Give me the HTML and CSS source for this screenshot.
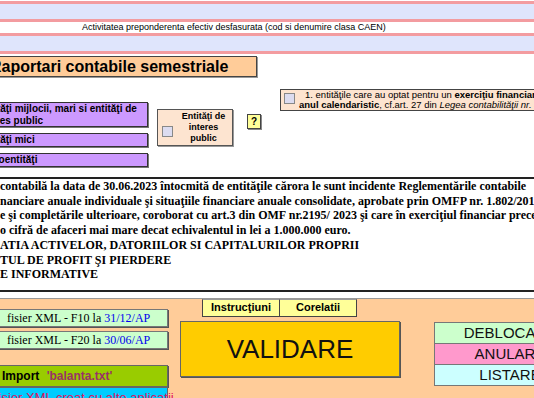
FILE: index.html
```html
<!DOCTYPE html>
<html lang="ro">
<head>
    <meta charset="UTF-8">
    <meta name="viewport" content="width=device-width, initial-scale=1.0">
    <title>Raportari contabile semestriale</title>
    <link rel="stylesheet" href="styles.css">
</head>
<body>
    <div class="caen">
        <div class="caen-cell"></div>
        <div class="caen-label">Activitatea preponderenta efectiv desfasurata (cod si denumire clasa CAEN)</div>
        <div class="caen-cell"></div>
    </div>

    <h1 class="title">Raportari contabile semestriale</h1>

    <div class="options">
        <div class="categories">
            <div class="cat cat-large">Entităţi mijlocii, mari si entităţi de<br>interes public</div>
            <div class="cat">Entităţi mici</div>
            <div class="cat">Microentităţi</div>
        </div>
        <div class="pie-box">
            <span class="check"></span>
            <span class="pie-text">Entităţi de<br>interes<br>public</span>
        </div>
        <div class="help">?</div>
        <div class="fiscal">
            <span class="check"></span>
            <span class="fiscal-text">
                <span class="indent">1. entităţile care au optat pentru un <b>exerciţiu financiar diferit de</b></span><br>
                <b>anul calendaristic</b>, cf.art. 27 din <i>Legea contabilităţii nr. 82/1991</i>
            </span>
        </div>
    </div>

    <div class="notes">
        <div class="intro">
            <p>contabilă la data de 30.06.2023 întocmită de entităţile cărora le sunt incidente Reglementările contabile</p>
            <p>nanciare anuale individuale şi situaţiile financiare anuale consolidate, aprobate prin OMFP nr. 1.802/2014</p>
            <p>e şi completările ulterioare, coroborat cu art.3 din OMF nr.2195/ 2023 şi care în exerciţiul financiar precedent</p>
            <p>o cifră de afaceri mai mare decat echivalentul in lei a 1.000.000 euro.</p>
        </div>
        <div class="reports">
            <p>ATIA ACTIVELOR, DATORIILOR SI CAPITALURILOR PROPRII</p>
            <p>TUL DE PROFIT ŞI PIERDERE</p>
            <p>E INFORMATIVE</p>
        </div>
    </div>

    <div class="panel">
        <div class="imports">
            <div class="btn-xml">fisier XML - F10 la <span class="date">31/12/AP</span></div>
            <div class="btn-xml">fisier XML - F20 la <span class="date">30/06/AP</span></div>
            <div class="btn-import">Import <span class="file">'balanta.txt'</span></div>
            <div class="btn-other">fisier XML creat cu alte aplicatii</div>
        </div>
        <div class="validate">
            <div class="tabs">
                <div class="tab">Instrucţiuni</div>
                <div class="tab">Corelatii</div>
            </div>
            <div class="btn-validate">VALIDARE</div>
        </div>
        <div class="actions">
            <div class="action unlock">DEBLOCARE</div>
            <div class="action cancel">ANULARE</div>
            <div class="action print">LISTARE</div>
        </div>
    </div>
</body>
</html>
```

FILE: styles.css
```css
* {
    margin: 0;
    padding: 0;
    box-sizing: border-box;
}

body {
    width: 534px;
    height: 398px;
    overflow: hidden;
    background-color: #fff;
    font-family: "Liberation Sans", Arial, sans-serif;
    color: #000;
}

/* CAEN header */

.caen {
    padding-top: 1px;
}

.caen-cell {
    height: 21px;
    background-color: #dfe5fc;
    border-top: 3px solid #f39ca0;
    border-bottom: 3px solid #f39ca0;
}

.caen-label {
    height: 11px;
    padding-left: 82px;
    font-size: 9px;
    line-height: 11px;
    white-space: nowrap;
}

.title {
    width: 268px;
    height: 21px;
    margin: 2px 0 0 -11px;
    background-color: #ffcc99;
    border: 1px solid #444;
    box-shadow: 1px 1px 0 #999;
    font-size: 16px;
    line-height: 19px;
    white-space: nowrap;
}

/* Entity options */

.options {
    display: flex;
    align-items: flex-start;
    height: 100px;
}

.categories {
    display: flex;
    flex-direction: column;
    gap: 6px;
    flex-shrink: 0;
    width: 174px;
    margin: 25px 0 0 -26px;
}

.cat {
    height: 14px;
    padding: 0 3px;
    background-color: #cc99ff;
    border: 1px solid #333;
    box-shadow: 1px 1px 0 #777;
    font-size: 10px;
    font-weight: bold;
    line-height: 12px;
    white-space: nowrap;
}

.cat-large {
    height: 25px;
    line-height: 11.5px;
}

.check {
    display: block;
    flex-shrink: 0;
    width: 11px;
    height: 11px;
    background-color: #dcdcf0;
    border: 1px solid #888;
}

.pie-box {
    display: flex;
    align-items: center;
    flex-shrink: 0;
    width: 76px;
    height: 37px;
    margin: 32px 0 0 9px;
    padding-left: 4px;
    background-color: #fde4d0;
    border: 1px solid #555;
    box-shadow: 1px 1px 0 #999;
}

.pie-box .check {
    margin-top: 8px;
}

.pie-text {
    flex: 1;
    padding-left: 2px;
    font-size: 9px;
    font-weight: bold;
    line-height: 11px;
    text-align: center;
}

.help {
    flex-shrink: 0;
    width: 14px;
    height: 15px;
    margin: 37px 0 0 14px;
    background-color: #ffff99;
    border: 1px solid #444;
    box-shadow: 1px 1px 0 #888;
    font-size: 10px;
    font-weight: bold;
    line-height: 13px;
    text-align: center;
}

.fiscal {
    display: flex;
    flex-shrink: 0;
    width: 340px;
    height: 22px;
    margin: 12px 0 0 19px;
    padding: 3px 0 0 3px;
    background-color: #fde4d0;
    border: 1px solid #444;
}

.fiscal-text {
    margin-top: -3px;
    padding-left: 4px;
    font-size: 9.5px;
    line-height: 10px;
    white-space: nowrap;
}

.fiscal-text .indent {
    padding-left: 6px;
}

/* Legal notes */

.notes {
    height: 115px;
    border-top: 2px solid #222;
    border-bottom: 2px solid #222;
    font-family: "Liberation Serif", "Times New Roman", serif;
    font-size: 12px;
    font-weight: bold;
    line-height: 14.7px;
    white-space: nowrap;
}

/* Bottom panel */

.panel {
    display: flex;
    align-items: flex-start;
    height: 100px;
    margin-top: 6px;
    background-color: #ffcc99;
    border-top: 1px solid #999;
}

.imports {
    display: flex;
    flex-direction: column;
    flex-shrink: 0;
    width: 188px;
    margin-left: -20px;
    padding-top: 10px;
}

.btn-xml {
    height: 18px;
    margin-bottom: 4px;
    padding-left: 26px;
    background-color: #ccffcc;
    border: 1px solid #777;
    box-shadow: 1px 1px 0 #555;
    font-family: "Liberation Serif", "Times New Roman", serif;
    font-size: 12px;
    line-height: 16px;
    white-space: nowrap;
}

.date {
    color: #0000ee;
}

.btn-import {
    height: 22px;
    margin-top: 12px;
    padding-left: 21px;
    background-color: #99cc00;
    border: 1px solid #666;
    box-shadow: 1px 1px 0 #555;
    font-size: 12px;
    font-weight: bold;
    line-height: 20px;
    white-space: nowrap;
}

.file {
    margin-left: 4px;
    color: #993366;
}

.btn-other {
    height: 22px;
    padding-left: 14px;
    background-color: #00ccff;
    border: 1px solid #666;
    color: #e0115f;
    font-size: 13px;
    line-height: 20px;
    white-space: nowrap;
}

.validate {
    flex-shrink: 0;
    width: 220px;
    margin-left: 12px;
}

.tabs {
    display: flex;
    margin-left: 22px;
}

.tab {
    width: 78px;
    height: 18px;
    margin-right: -1px;
    background-color: #ffff99;
    border: 1px solid #444;
    border-top-color: #999;
    font-size: 11px;
    font-weight: bold;
    line-height: 15px;
    text-align: center;
}

.btn-validate {
    height: 56px;
    margin-top: 4px;
    background-color: #ffcc00;
    border: 1px solid #666;
    box-shadow: 1px 1px 0 #555;
    color: #111;
    font-size: 26px;
    line-height: 54px;
    text-align: center;
}

.actions {
    flex-shrink: 0;
    width: 152px;
    margin-left: 34px;
    padding-top: 23px;
}

.action {
    height: 22px;
    margin-top: -1px;
    border: 1px solid #777;
    font-size: 15px;
    line-height: 20px;
    text-align: center;
    color: #111;
}

.unlock {
    margin-top: 0;
    background-color: #ccffcc;
}

.cancel {
    background-color: #ff99cc;
}

.print {
    background-color: #ccffff;
}
```
